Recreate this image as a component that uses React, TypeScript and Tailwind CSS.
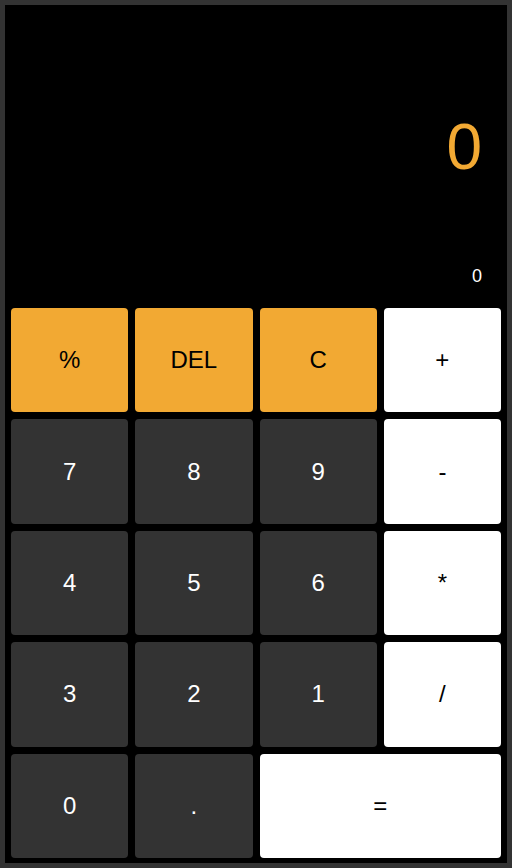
import React from "react";

type Btn = { label: string; kind: "orange" | "dark" | "white"; span?: number };

const buttons: Btn[] = [
  { label: "%", kind: "orange" },
  { label: "DEL", kind: "orange" },
  { label: "C", kind: "orange" },
  { label: "+", kind: "white" },
  { label: "7", kind: "dark" },
  { label: "8", kind: "dark" },
  { label: "9", kind: "dark" },
  { label: "-", kind: "white" },
  { label: "4", kind: "dark" },
  { label: "5", kind: "dark" },
  { label: "6", kind: "dark" },
  { label: "*", kind: "white" },
  { label: "3", kind: "dark" },
  { label: "2", kind: "dark" },
  { label: "1", kind: "dark" },
  { label: "/", kind: "white" },
  { label: "0", kind: "dark" },
  { label: ".", kind: "dark" },
  { label: "=", kind: "white", span: 2 },
];

const kindClass: Record<Btn["kind"], string> = {
  orange: "bg-[#f2a933] text-black",
  dark: "bg-[#333333] text-white",
  white: "bg-white text-black",
};

export default function App() {
  return (
    <div
      className="w-[512px] h-[868px] border-[5px] border-[#333333] bg-black flex flex-col"
      style={{ fontFamily: '"Liberation Sans", Arial, sans-serif' }}
    >
      <div className="h-[297px] shrink-0 flex flex-col items-end pt-[110px] pr-[25px]">
        <div className="text-[64px] leading-none text-[#f2a933]">0</div>
        <div className="mt-[88px] text-[18px] leading-none text-white">0</div>
      </div>
      <div className="flex-1 grid grid-cols-4 grid-rows-5 gap-[7px] pt-[6px] px-[6px] pb-[5px]">
        {buttons.map((b, i) => (
          <button
            key={i}
            className={`${kindClass[b.kind]} ${b.span === 2 ? "col-span-2" : ""} rounded flex items-center justify-center text-[24px] leading-none`}
          >
            {b.label}
          </button>
        ))}
      </div>
    </div>
  );
}
